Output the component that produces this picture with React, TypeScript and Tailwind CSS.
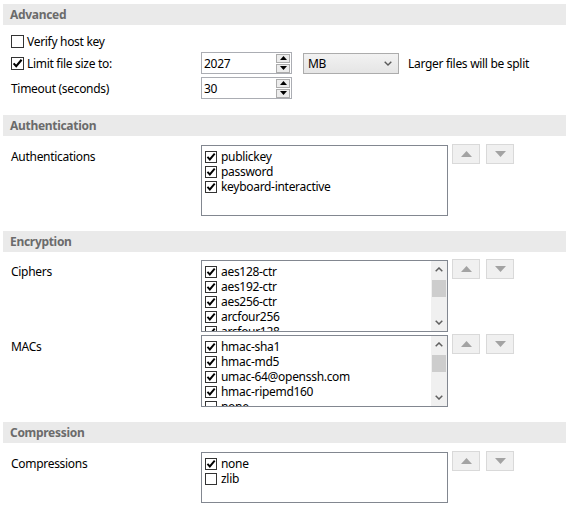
import type { ReactNode } from "react";

const FONT = { fontFamily: '"Segoe UI", "Noto Sans", "Open Sans", sans-serif', letterSpacing: "-0.3px" };

function Check({ checked, size = 13 }: { checked: boolean; size?: number }) {
  return (
    <span
      className="inline-flex shrink-0 items-center justify-center border border-[#333] bg-white"
      style={{ width: size, height: size }}
    >
      {checked && (
        <svg width={size - 2} height={size - 2} viewBox="0 0 11 11">
          <path d="M1.6 5.4 L4.2 8.2 L9.6 1.8" fill="none" stroke="#000" strokeWidth="2.1" />
        </svg>
      )}
    </span>
  );
}

function Header({ title }: { title: string }) {
  return (
    <div className="flex h-[21px] items-center bg-[#eaeaea] pl-[7px] text-[12px] leading-[15px] font-bold text-[#6b6b6b]">
      {title}
    </div>
  );
}

function Spin({ value }: { value: string }) {
  return (
    <div className="flex h-[22px] w-[91px] items-center border border-[#abadb3] bg-white pl-[2px]">
      <span className="flex-1 text-[12px] leading-[15px] text-black">{value}</span>
      <div className="mr-[1px] flex flex-col gap-[1px]">
        <span className="flex h-[9px] w-[14px] items-center justify-center border border-[#acacac] bg-[#ececec]">
          <svg width="7" height="4" viewBox="0 0 7 4">
            <path d="M0 4 L3.5 0 L7 4 Z" fill="#000" />
          </svg>
        </span>
        <span className="flex h-[9px] w-[14px] items-center justify-center border border-[#acacac] bg-[#ececec]">
          <svg width="7" height="4" viewBox="0 0 7 4">
            <path d="M0 0 L3.5 4 L7 0 Z" fill="#000" />
          </svg>
        </span>
      </div>
    </div>
  );
}

function MoveButtons() {
  return (
    <div className="ml-[4px] -mt-[1px] flex gap-[6px]">
      <span className="flex h-[20px] w-[28px] items-center justify-center border border-[#d9d9d9] bg-[#f0f0f0]">
        <svg width="11" height="6" viewBox="0 0 11 6">
          <path d="M0 6 L5.5 0 L11 6 Z" fill="#a3a3a3" />
        </svg>
      </span>
      <span className="flex h-[20px] w-[28px] items-center justify-center border border-[#d9d9d9] bg-[#f0f0f0]">
        <svg width="11" height="6" viewBox="0 0 11 6">
          <path d="M0 0 L5.5 6 L11 0 Z" fill="#a3a3a3" />
        </svg>
      </span>
    </div>
  );
}

type Item = { label: string; checked: boolean };

function CheckList({ items, height, scroll }: { items: Item[]; height: number; scroll?: boolean }) {
  return (
    <div className="flex w-[247px] overflow-hidden border border-[#828790] bg-white" style={{ height }}>
      <div className="flex-1 overflow-hidden pl-[3px] pt-[3px]">
        {items.map((it) => (
          <div key={it.label} className="flex h-[15px] items-center gap-[4px] text-[12px] leading-[15px] text-black">
            <Check checked={it.checked} size={12} />
            <span className="whitespace-nowrap">{it.label}</span>
          </div>
        ))}
      </div>
      {scroll && (
        <div className="flex w-[16px] flex-col bg-[#f0f0f0]">
          <span className="flex h-[17px] items-center justify-center">
            <svg width="8" height="5" viewBox="0 0 8 5">
              <path d="M0.7 4.3 L4 1 L7.3 4.3" fill="none" stroke="#606060" strokeWidth="1.5" />
            </svg>
          </span>
          <span className="mx-[1px] mt-[2px] h-[17px] bg-[#cdcdcd]" />
          <span className="flex-1" />
          <span className="flex h-[17px] items-center justify-center">
            <svg width="8" height="5" viewBox="0 0 8 5">
              <path d="M0.7 0.7 L4 4 L7.3 0.7" fill="none" stroke="#606060" strokeWidth="1.5" />
            </svg>
          </span>
        </div>
      )}
    </div>
  );
}

function ListRow({ label, children }: { label: string; children: ReactNode }) {
  return (
    <div className="flex">
      <div className="w-[198px] pl-[8px] pt-[4px] text-[12px] leading-[15px] text-black">{label}</div>
      {children}
    </div>
  );
}

export default function App() {
  return (
    <div className="h-[509px] w-[569px] overflow-hidden bg-white px-[3px] pt-[4px]" style={FONT}>
      <Header title="Advanced" />
      <div className="mt-[6px] flex h-[20px] items-center gap-[3px] pl-[8px] text-[12px] leading-[15px] text-black">
        <Check checked={false} />
        <span>Verify host key</span>
      </div>
      <div className="mt-[1px] flex items-center">
        <div className="flex w-[198px] items-center gap-[3px] pl-[8px] text-[12px] leading-[15px] text-black">
          <Check checked />
          <span>Limit file size to:</span>
        </div>
        <Spin value="2027" />
        <div className="ml-[11px] flex h-[21px] w-[96px] items-center justify-between border border-[#acacac] bg-gradient-to-b from-[#f2f2f2] to-[#e5e5e5] pl-[4px] pr-[6px] text-[12px] leading-[15px] text-black">
          <span>MB</span>
          <svg width="8" height="5" viewBox="0 0 8 5">
            <path d="M0.7 0.7 L4 4 L7.3 0.7" fill="none" stroke="#5a5a5a" strokeWidth="1.4" />
          </svg>
        </div>
        <span className="ml-[9px] text-[12px] leading-[15px] text-black">Larger files will be split</span>
      </div>
      <div className="mt-[3px] flex items-center">
        <div className="w-[198px] pl-[8px] pt-[1px] text-[12px] leading-[15px] text-black">Timeout (seconds)</div>
        <Spin value="30" />
      </div>

      <div className="mt-[16px]">
        <Header title="Authentication" />
      </div>
      <div className="mt-[9px]">
        <ListRow label="Authentications">
          <CheckList
            height={71}
            items={[
              { label: "publickey", checked: true },
              { label: "password", checked: true },
              { label: "keyboard-interactive", checked: true },
            ]}
          />
          <MoveButtons />
        </ListRow>
      </div>

      <div className="mt-[15px]">
        <Header title="Encryption" />
      </div>
      <div className="mt-[8px]">
        <ListRow label="Ciphers">
          <CheckList
            height={72}
            scroll
            items={[
              { label: "aes128-ctr", checked: true },
              { label: "aes192-ctr", checked: true },
              { label: "aes256-ctr", checked: true },
              { label: "arcfour256", checked: true },
              { label: "arcfour128", checked: true },
            ]}
          />
          <MoveButtons />
        </ListRow>
      </div>
      <div className="mt-[3px]">
        <ListRow label="MACs">
          <CheckList
            height={72}
            scroll
            items={[
              { label: "hmac-sha1", checked: true },
              { label: "hmac-md5", checked: true },
              { label: "umac-64@openssh.com", checked: true },
              { label: "hmac-ripemd160", checked: true },
              { label: "none", checked: false },
            ]}
          />
          <MoveButtons />
        </ListRow>
      </div>

      <div className="mt-[15px]">
        <Header title="Compression" />
      </div>
      <div className="mt-[9px]">
        <ListRow label="Compressions">
          <CheckList
            height={51}
            items={[
              { label: "none", checked: true },
              { label: "zlib", checked: false },
            ]}
          />
          <MoveButtons />
        </ListRow>
      </div>
    </div>
  );
}
